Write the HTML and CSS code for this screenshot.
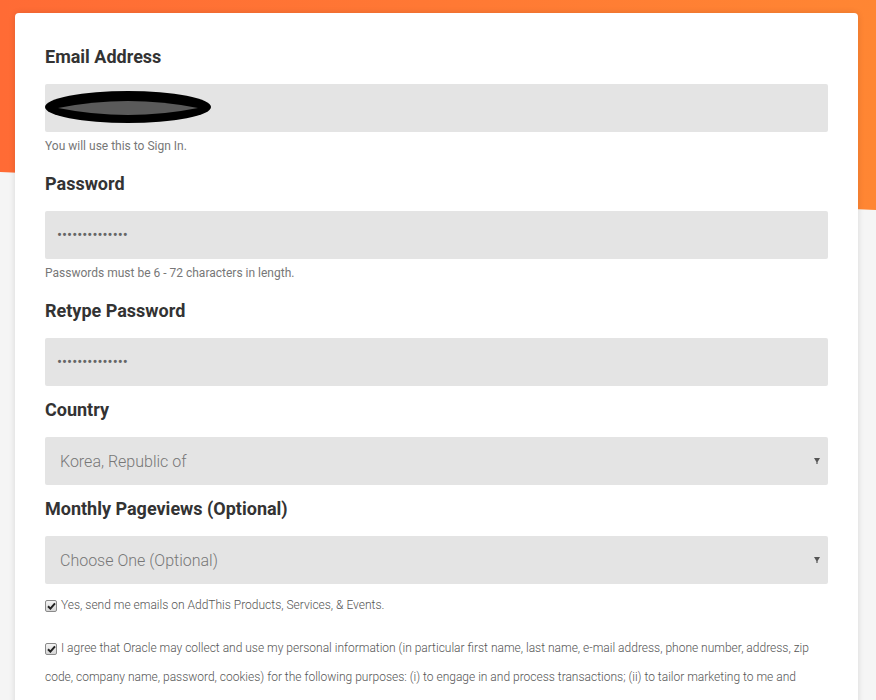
FILE: index.html
```html
<!DOCTYPE html>
<html lang="en">
<head>
<meta charset="utf-8">
<title>Sign Up</title>
<link rel="stylesheet" href="styles.css">
</head>
<body>
<div class="hero"></div>
<main class="card">
  <form class="form">
    <div class="field">
      <label class="label" for="email">Email Address</label>
      <div class="control">
        <input class="input" id="email" type="email">
        <svg class="redact" width="172" height="38" viewBox="0 0 172 38" aria-hidden="true">
          <ellipse cx="85" cy="19" rx="83" ry="16" fill="#000"/>
          <path d="M15 20 Q85 6 155 20 Q85 34 15 20 Z" fill="#5a5a5a"/>
        </svg>
      </div>
      <p class="hint">You will use this to Sign In.</p>
    </div>
    <div class="field">
      <label class="label" for="pw">Password</label>
      <input class="input pw" id="pw" type="password" value="aaaaaaaaaaaaaa">
      <p class="hint">Passwords must be 6 - 72 characters in length.</p>
    </div>
    <div class="field">
      <label class="label" for="pw2">Retype Password</label>
      <input class="input pw" id="pw2" type="password" value="aaaaaaaaaaaaaa">
    </div>
    <div class="field">
      <label class="label" for="country">Country</label>
      <div class="control">
        <select class="input select" id="country">
          <option>Korea, Republic of</option>
        </select>
        <svg class="arrow" width="6" height="6" viewBox="0 0 6 6" aria-hidden="true"><path d="M0 0H6L3.6 4V6H2.4V4Z" fill="#555"/></svg>
      </div>
    </div>
    <div class="field">
      <label class="label" for="views">Monthly Pageviews (Optional)</label>
      <div class="control">
        <select class="input select" id="views">
          <option>Choose One (Optional)</option>
        </select>
        <svg class="arrow" width="6" height="6" viewBox="0 0 6 6" aria-hidden="true"><path d="M0 0H6L3.6 4V6H2.4V4Z" fill="#555"/></svg>
      </div>
    </div>
    <p class="check">
      <span class="box"><svg width="9" height="8" viewBox="0 0 9 8"><path d="M1 4.2 L3.4 6.6 L8 1.4" fill="none" stroke="#222" stroke-width="2"/></svg></span>Yes, send me emails on AddThis Products, Services, &amp; Events.
    </p>
    <p class="check long">
      <span class="box"><svg width="9" height="8" viewBox="0 0 9 8"><path d="M1 4.2 L3.4 6.6 L8 1.4" fill="none" stroke="#222" stroke-width="2"/></svg></span>I agree that Oracle may collect and use my personal information (in particular first name, last name, e-mail address, phone number, address, zip code, company name, password, cookies) for the following purposes: (i) to engage in and process transactions; (ii) to tailor marketing to me and
    </p>
  </form>
</main>
</body>
</html>
```
FILE: styles.css
```css
html, body {
  margin: 0;
  padding: 0;
}
body {
  background: #f5f5f5;
  font-family: Roboto, "Liberation Sans", sans-serif;
  position: relative;
  overflow: hidden;
  height: 700px;
}
.hero {
  position: absolute;
  left: 0;
  top: 0;
  width: 100%;
  height: 210px;
  background: linear-gradient(90deg, #ff6b35, #ff8633);
  clip-path: polygon(0 0, 100% 0, 100% 210px, 0 172px);
}
.card {
  position: relative;
  margin: 13px 18px 0 15px;
  background: #fff;
  border-radius: 4px;
  box-shadow: 0 0 6px rgba(0, 0, 0, 0.12);
  padding: 32px 30px 40px;
}
.form {
  display: flex;
  flex-direction: column;
}
.field {
  margin-bottom: 12px;
}
.label {
  display: block;
  font-size: 18px;
  line-height: 24px;
  font-weight: 700;
  color: #333;
  margin-bottom: 15px;
}
.control {
  position: relative;
}
.input {
  display: block;
  box-sizing: border-box;
  width: 100%;
  height: 48px;
  border: 0;
  border-radius: 2px;
  background: #e4e4e4;
  margin: 0;
  padding: 0 12px;
  font-family: Roboto, "Liberation Sans", sans-serif;
  color: #666;
  outline: none;
}
.pw {
  font-size: 15px;
  letter-spacing: 0;
}
.select {
  -webkit-appearance: none;
  appearance: none;
  padding: 0 15px;
  font-size: 16px;
  font-weight: 300;
  color: #777;
}
.arrow {
  position: absolute;
  right: 8px;
  top: 21px;
}
.redact {
  position: absolute;
  left: -2px;
  top: 4px;
}
.hint {
  margin: 5px 0 5px;
  font-size: 12px;
  line-height: 18px;
  color: #777;
}
.check {
  margin: 0;
  font-size: 12px;
  line-height: 18px;
  font-weight: 300;
  color: #555;
}
.check.long {
  margin-top: 20px;
  line-height: 29px;
}
.box {
  display: inline-flex;
  align-items: center;
  justify-content: center;
  box-sizing: border-box;
  width: 12px;
  height: 12px;
  margin-right: 4px;
  vertical-align: -1px;
  border: 1px solid #8a8a8a;
  border-radius: 2px;
  background: linear-gradient(#f4f4f4, #d6d6d6);
}
```
